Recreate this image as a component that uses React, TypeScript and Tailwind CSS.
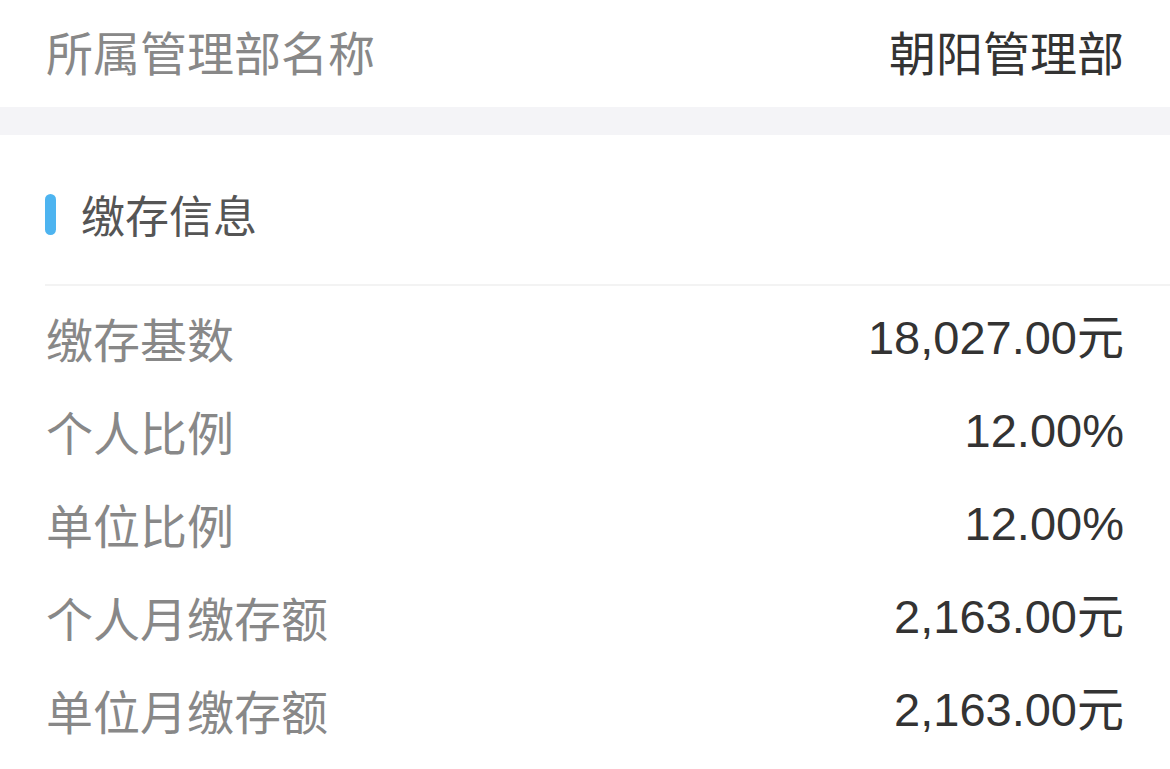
const font = { fontFamily: '"Noto Sans CJK SC", "Noto Sans", sans-serif' };
const numFont = { fontFamily: '"Liberation Sans", "Noto Sans CJK SC", sans-serif' };

const rows = [
  { label: "缴存基数", value: "18,027.00元" },
  { label: "个人比例", value: "12.00%" },
  { label: "单位比例", value: "12.00%" },
  { label: "个人月缴存额", value: "2,163.00元" },
  { label: "单位月缴存额", value: "2,163.00元" },
];

export default function App() {
  return (
    <div className="w-[1170px] h-[769px] bg-white overflow-hidden" style={font}>
      {/* 管理部 */}
      <div className="h-[107px] px-[46px] flex items-center justify-between pb-[7px]">
        <span className="text-[47px] leading-none text-[#888888]">所属管理部名称</span>
        <span className="text-[47px] leading-none text-[#333333]">朝阳管理部</span>
      </div>
      <div className="h-[28px] bg-[#f4f4f7]" />

      {/* 缴存信息 */}
      <div className="pl-[45px]">
        <div className="flex items-center gap-[25px] pt-[57px] pb-[48px]">
          <div className="w-[11px] h-[41px] rounded-full bg-[#4db4f0]" />
          <span className="text-[44px] leading-none text-[#555555]">缴存信息</span>
        </div>
        <div className="h-[2px] bg-[#f3f3f3]" />
      </div>

      <div className="pt-[5px] px-[46px]">
        {rows.map((r) => (
          <div key={r.label} className="h-[93px] flex items-center justify-between">
            <span className="text-[47px] leading-none text-[#888888]">{r.label}</span>
            <span className="text-[47px] leading-none text-[#333333]" style={numFont}>{r.value}</span>
          </div>
        ))}
      </div>
    </div>
  );
}
